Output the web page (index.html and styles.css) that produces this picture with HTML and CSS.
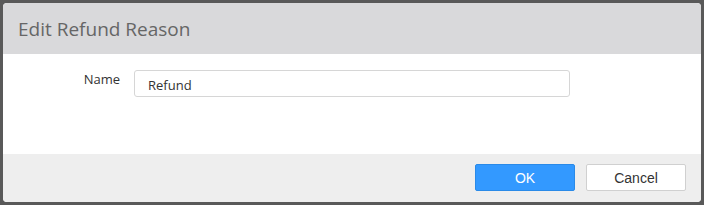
FILE: index.html
```html
<!DOCTYPE html>
<html lang="en">
<head>
<meta charset="UTF-8">
<title>Edit Refund Reason</title>
<link rel="stylesheet" href="styles.css">
</head>
<body>
    <div class="dialog">
        <div class="dialog-header">
            <h2>Edit Refund Reason</h2>
        </div>
        <div class="dialog-body">
            <div class="field">
                <label for="name">Name</label>
                <input type="text" id="name" value="Refund">
            </div>
        </div>
        <div class="dialog-footer">
            <button class="btn btn-primary">OK</button>
            <button class="btn">Cancel</button>
        </div>
    </div>
</body>
</html>
```

FILE: styles.css
```css
body {
    margin: 0;
    padding: 3px;
    background-color: #595959;
    font-family: "Open Sans", "Noto Sans", sans-serif;
}
.dialog {
    width: 698px;
    height: 199px;
    background-color: #fff;
    border-radius: 4px;
    overflow: hidden;
    display: flex;
    flex-direction: column;
}
.dialog-header {
    height: 51px;
    background-color: #d9d9db;
    display: flex;
    align-items: center;
    padding-left: 15px;
}
.dialog-header h2 {
    margin: 0;
    font-size: 19px;
    font-weight: normal;
    color: #666;
}
.dialog-body {
    height: 100px;
    padding-top: 16px;
    box-sizing: border-box;
}
.field {
    display: flex;
    align-items: flex-start;
}
.field label {
    width: 131px;
    text-align: right;
    font-size: 13px;
    color: #333;
    padding-right: 14px;
    box-sizing: border-box;
}
.field input {
    width: 436px;
    height: 27px;
    box-sizing: border-box;
    border: 1px solid #d6d6d6;
    border-radius: 3px;
    padding: 2px 13px 0;
    font-family: "Open Sans", "Noto Sans", sans-serif;
    font-size: 13px;
    color: #333;
}
.dialog-footer {
    flex: 1;
    background-color: #eeeeee;
    display: flex;
    justify-content: flex-end;
    align-items: flex-start;
    gap: 11px;
    padding: 10px 15px 0 0;
}
.btn {
    width: 100px;
    height: 27px;
    border: 1px solid #d0d0d0;
    border-radius: 2px;
    background-color: #fff;
    font-family: "Liberation Sans", Arial, sans-serif;
    font-size: 14px;
    color: #333;
    cursor: pointer;
}
.btn-primary {
    background-color: #3399ff;
    border-color: #2a8ae8;
    color: #fff;
}
```
